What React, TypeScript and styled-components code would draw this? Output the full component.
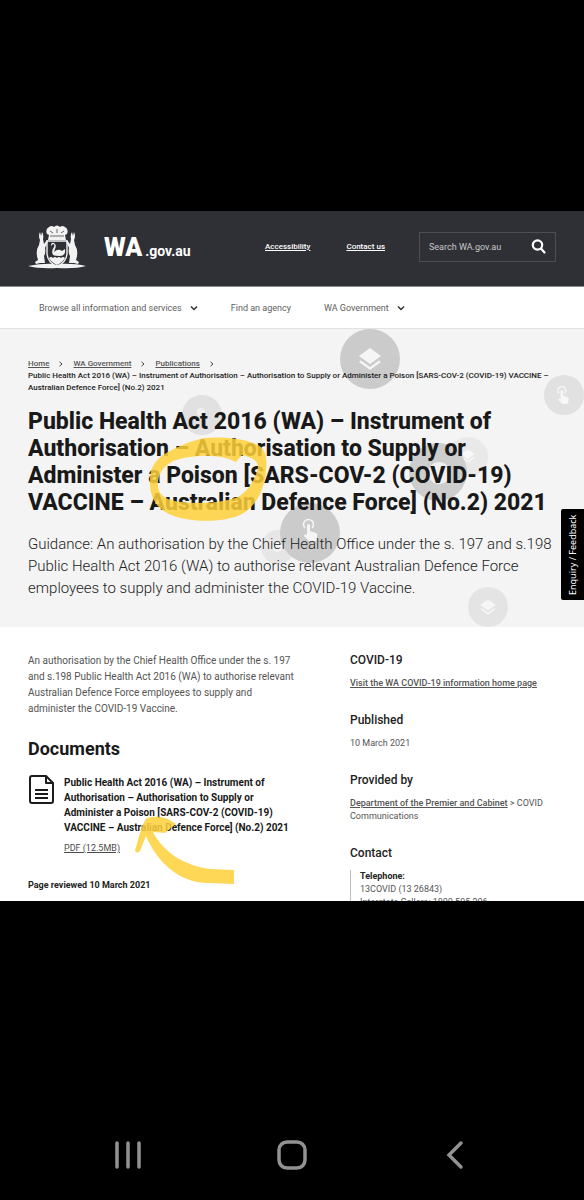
import React from "react";
import styled, { createGlobalStyle } from "styled-components";

const Global = createGlobalStyle`
  *, *::before, *::after { box-sizing: border-box; }
  body { margin: 0; background: #000; font-family: Roboto, "Liberation Sans", sans-serif; color: #4a4a4a; }
  h1, h2, h3, p, ol { margin: 0; padding: 0; }
  a { color: inherit; text-underline-offset: 1px; }
  svg { display: block; }
`;

const Screen = styled.div`
  display: flex;
  flex-direction: column;
  height: 100vh;
  background: #000;
`;

const Letterbox = styled.div`
  flex: 211 1 0;
`;

const Browser = styled.div`
  position: relative;
  flex: 690 1 0;
  min-height: 0;
  overflow: hidden;
  background: #fff;
`;

const Header = styled.header`
  display: flex;
  align-items: center;
  height: 75px;
  padding: 0 28px 4px;
  background: #2f3035;
  color: #fff;
`;

const Brand = styled.a`
  display: flex;
  align-items: center;
  gap: 18px;
  text-decoration: none;
`;

const Wordmark = styled.span`
  padding-top: 6px;
  font-size: 25px;
  font-weight: 900;
  line-height: 30px;
  white-space: nowrap;
  small { margin-left: 3px; font-size: 14px; font-weight: 700; }
`;

const TopLinks = styled.nav`
  flex: 1;
  display: flex;
  justify-content: flex-end;
  gap: 36px;
  margin-right: 34px;
  font-size: 8px;
  font-weight: 500;
  white-space: nowrap;
`;

const SearchBox = styled.form`
  display: flex;
  align-items: center;
  width: 137px;
  height: 30px;
  padding: 0 9px;
  border: 1px solid #4c4d52;
`;

const SearchInput = styled.input`
  flex: 1;
  min-width: 0;
  padding: 0;
  border: 0;
  outline: 0;
  background: transparent;
  color: #fff;
  font: 400 9px/14px Roboto, sans-serif;
  &::placeholder { color: #c8c8ca; opacity: 1; }
`;

const IconButton = styled.button`
  padding: 0;
  border: 0;
  background: none;
  color: inherit;
`;

const MainNav = styled.nav`
  display: flex;
  align-items: center;
  gap: 33px;
  height: 43px;
  padding: 0 39px;
  border-top: 1px solid #8d8d8f;
  border-bottom: 1px solid #e2e2e2;
  background: #fff;
`;

const NavItem = styled.button`
  display: flex;
  align-items: center;
  gap: 8px;
  padding: 0;
  border: 0;
  background: none;
  color: #5e5e5e;
  font: 400 9px/12px Roboto, sans-serif;
`;

const Hero = styled.section`
  position: relative;
  height: 298px;
  padding: 29px 28px 0;
  background: #f4f4f4;
`;

const Layer = styled.svg`
  position: absolute;
  left: 0;
  top: 0;
  pointer-events: none;
`;

const HeroBody = styled.div`
  position: relative;
`;

const Crumbs = styled.ol`
  display: flex;
  flex-wrap: wrap;
  list-style: none;
  color: #555;
  font-size: 8px;
  font-weight: 500;
  line-height: 12px;
  li { display: flex; align-items: center; gap: 10px; margin-right: 10px; }
`;

const CurrentCrumb = styled.li`
  && { display: block; width: 100%; margin: 0; color: #222; }
`;

const Title = styled.h1`
  margin-top: 14px;
  color: #191919;
  font-size: 23px;
  font-weight: 800;
  line-height: 27px;
  white-space: nowrap;
`;

const Lead = styled.p`
  margin-top: 17px;
  color: #222;
  font-size: 15px;
  font-weight: 300;
  line-height: 22px;
  white-space: nowrap;
`;

const Feedback = styled.button`
  position: absolute;
  right: 0;
  top: 298px;
  width: 23px;
  height: 91px;
  padding: 0;
  border: 0;
  border-radius: 2px 0 0 2px;
  background: #000;
  color: #fff;
  font: 400 9px/23px "Noto Sans", sans-serif;
  writing-mode: vertical-rl;
  white-space: nowrap;
  span { display: block; transform: rotate(180deg); }
`;

const Columns = styled.div`
  display: grid;
  grid-template-columns: 1fr 206px;
  column-gap: 50px;
  padding: 26px 28px 0;
`;

const Summary = styled.p`
  font-size: 10px;
  line-height: 16px;
  color: #555;
  white-space: nowrap;
`;

const SectionTitle = styled.h2`
  margin-top: 21px;
  color: #191919;
  font-size: 18px;
  font-weight: 700;
  line-height: 22px;
`;

const Document = styled.article`
  display: flex;
  gap: 10px;
  margin-top: 15px;
`;

const DocTitle = styled.h3`
  color: #191919;
  font-size: 10px;
  font-weight: 700;
  line-height: 15px;
  white-space: nowrap;
`;

const DocLink = styled.a`
  display: inline-block;
  margin-top: 6px;
  font-size: 9px;
  line-height: 14px;
`;

const Reviewed = styled.p`
  margin-top: 23px;
  color: #222;
  font-size: 9px;
  font-weight: 700;
  line-height: 14px;
`;

const Aside = styled.aside`
  display: flex;
  flex-direction: column;
  gap: 23px;
`;

const Fact = styled.section`
  color: #555;
  font-size: 9px;
  line-height: 13px;
  white-space: nowrap;
  a { font-weight: 500; }
`;

const FactTitle = styled.h3`
  margin-bottom: 9px;
  color: #222;
  font-size: 12px;
  font-weight: 500;
  line-height: 15px;
`;

const Telephone = styled.div`
  padding-left: 9px;
  border-left: 1px solid #bbb;
  strong { color: #222; font-weight: 700; }
`;

const PhoneBar = styled.nav`
  flex: 299 1 0;
  display: flex;
  align-items: flex-end;
  justify-content: space-between;
  padding: 0 112px;
  color: #929292;
  button { margin-bottom: 28px; }
`;

const Chevron = () => (
  <svg width="8" height="8" viewBox="0 0 8 8" fill="none" stroke="#333" strokeWidth="1.5"><path d="M1 2.5 4 5.5 7 2.5" /></svg>
);
const CrumbArrow = () => (
  <svg width="4" height="6" viewBox="0 0 4 6" fill="none" stroke="#444"><path d="M.5.8 3 3 .5 5.2" /></svg>
);

const Crest = () => (
  <svg width="58" height="44" viewBox="0 0 58 44" fill="#f2f2f2">
    <path d="M0 41q14-3 29-2 17-1 29 2-10 3-29 2-18 1-29-2z" />
    <path d="M19 9q-2-5 2-7 3-2 5 0 3-3 6 0 2-2 5 0 4 2 2 7l-2 1 1 5H20l1-5z" />
    <path d="M19 16h20v13q-1 9-10 12-9-3-10-12z" fill="#2f3035" stroke="#f2f2f2" strokeWidth="1.4" />
    <path d="M21 33q2-2 4 0 2-2 4 0 2-2 4 0 2-2 4 0-2 4-8 7-6-3-8-7z" />
    <path d="M25 30q-2-4 1-8 1-3-1-3l-2 2q0-4 3-3 3 2 1 6l-1 3q4-4 8-1l3-2q1 7-5 7-5 0-7-1z" />
    <path d="M12 7l1 4 1-4q2 3 1 7l1 5 3-4 1 1-3 7q1 5-1 8l1 7h-5l-4 1-1-2 3-2q-3-9 1-15l1-5q-2-4 0-8z" />
    <path d="M46 7l-1 4-1-4q-2 3-1 7l-1 5-3-4-1 1 3 7q-1 5 1 8l-1 7h5l4 1 1-2-3-2q3-9-1-15l-1-5q2-4 0-8z" />
    <path d="M22 11h14M22 6l3 2M29 4v4M36 6l-3 2" stroke="#68696d" fill="none" />
  </svg>
);

interface GlyphProps {
  x: number;
  y: number;
  s?: number;
  fill?: string;
}

const LayersGlyph = ({ x, y, s = 1, fill = "#fff" }: GlyphProps) => (
  <g transform={`translate(${x} ${y}) scale(${s})`} fill={fill}>
    <path d="M0-11 11-3 0 5-11-3z" />
    <path d="M-11 3-9 1.500 0 8 9 1.500 11 3 0 11z" />
  </g>
);

const TouchGlyph = ({ x, y, s = 1, fill = "#fff" }: GlyphProps) => (
  <g transform={`translate(${x} ${y}) scale(${s})`}>
    <path d="M-5-2a5 5 0 1 1 7 0" fill="none" stroke={fill} strokeWidth="1.6" />
    <path d="M-3-5q1.500-2 3 0v6l6 2q2 1 1 3l-1 5h-7l-5-5 1-2 2 1z" fill={fill} />
  </g>
);

const Decor = () => (
  <Layer width="584" height="298" viewBox="0 329 584 298" aria-hidden="true">
    <circle cx="468" cy="457" r="20" fill="#e9e9e9" />
    <LayersGlyph x={468} y={456} s={0.6} fill="#f8f8f8" />
    <circle cx="370" cy="359" r="30" fill="#cbcbcb" />
    <LayersGlyph x={370} y={359} fill="#f5f5f5" />
    <circle cx="564" cy="395" r="20" fill="#e1e1e1" />
    <TouchGlyph x={563} y={395} s={0.8} fill="#f8f8f8" />
    <circle cx="202" cy="415" r="20" fill="#e1e1e1" />
    <circle cx="201" cy="412" r="4" fill="#f1f1f1" />
    <circle cx="438" cy="472" r="29" fill="#cdcdcd" />
    <circle cx="439" cy="473" r="11" fill="#f0f0f0" />
    <circle cx="278" cy="547" r="17" fill="#e6e6e6" />
    <circle cx="277" cy="547" r="5" fill="#f3f3f3" />
    <circle cx="310" cy="533" r="30" fill="#cbcbcb" />
    <TouchGlyph x={310} y={530} fill="#f5f5f5" />
    <circle cx="488" cy="607" r="20" fill="#e4e4e4" />
    <LayersGlyph x={488} y={607} s={0.7} fill="#f6f6f6" />
  </Layer>
);

const Marker = () => (
  <Layer width="584" height="690" viewBox="0 211 584 690" fill="#ffd03a" fillOpacity="0.85" aria-hidden="true">
    <path
      fillRule="evenodd"
      d="M150 485C149 472 153 462 163 455C176 447 190 441 205 438C225 436 250 439 261 447C268 454 267 466 265 478C262 495 253 509 240 515C222 523 190 522 174 516C160 511 151 502 150 485zM158 487C159 496 168 501 182 502C200 504 222 503 238 497C249 491 257 476 258 466C257 460 251 457 242 455L236 462 229 459C212 453 186 456 173 461C162 467 157 476 158 487z"
    />
    <path d="M147 818C142 822 138 842 135 850Q136 855 140 851L146 836C156 860 178 883 208 883L234 884V870L210 869C185 866 163 852 153 832L165 833 176 824C168 817 156 815 147 818z" />
  </Layer>
);

export default function App() {
  return (
    <>
      <Global />
      <Screen>
        <Letterbox />
        <Browser>
          <Header>
            <Brand href="#" aria-label="WA.gov.au">
              <Crest />
              <Wordmark>WA<small>.gov.au</small></Wordmark>
            </Brand>
            <TopLinks>
              <a href="#">Accessibility</a>
              <a href="#">Contact us</a>
            </TopLinks>
            <SearchBox>
              <SearchInput aria-label="Search" placeholder="Search WA.gov.au" />
              <IconButton type="button" aria-label="Submit search">
                <svg width="15" height="15" viewBox="0 0 15 15" fill="none" stroke="#fff" strokeWidth="2.2" strokeLinecap="round"><circle cx="6.500" cy="6" r="4.700" /><path d="m10 9.500 3.500 4" /></svg>
              </IconButton>
            </SearchBox>
          </Header>
          <MainNav>
            <NavItem>Browse all information and services <Chevron /></NavItem>
            <NavItem>Find an agency</NavItem>
            <NavItem>WA Government <Chevron /></NavItem>
          </MainNav>
          <Hero>
            <Decor />
            <HeroBody>
              <Crumbs>
                <li><a href="#">Home</a><CrumbArrow /></li>
                <li><a href="#">WA Government</a><CrumbArrow /></li>
                <li><a href="#">Publications</a><CrumbArrow /></li>
                <CurrentCrumb>Public Health Act 2016 (WA) – Instrument of Authorisation – Authorisation to Supply or Administer a Poison [SARS-COV-2 (COVID-19) VACCINE –<br />Australian Defence Force] (No.2) 2021</CurrentCrumb>
              </Crumbs>
              <Title>
                Public Health Act 2016 (WA) – Instrument of<br />
                Authorisation – Authorisation to Supply or<br />
                Administer a Poison [SARS-COV-2 (COVID-19)<br />
                VACCINE – Australian Defence Force] (No.2) 2021
              </Title>
              <Lead>
                Guidance: An authorisation by the Chief Health Office under the s. 197 and s.198<br />
                Public Health Act 2016 (WA) to authorise relevant Australian Defence Force<br />
                employees to supply and administer the COVID-19 Vaccine.
              </Lead>
            </HeroBody>
          </Hero>
          <Columns>
            <main>
              <Summary>
                An authorisation by the Chief Health Office under the s. 197<br />
                and s.198 Public Health Act 2016 (WA) to authorise relevant<br />
                Australian Defence Force employees to supply and<br />
                administer the COVID-19 Vaccine.
              </Summary>
              <SectionTitle>Documents</SectionTitle>
              <Document>
                <svg width="26" height="29" viewBox="0 0 26 29" fill="none" stroke="#1c1c1c" strokeWidth="2" strokeLinejoin="round"><path d="M4 1h14l7 7v18q0 2-2 2H4q-2 0-2-2V3q0-2 2-2zM18 1v7h7M7 15h13M7 19h13M7 23h13" /></svg>
                <div>
                  <DocTitle>
                    Public Health Act 2016 (WA) – Instrument of<br />
                    Authorisation – Authorisation to Supply or<br />
                    Administer a Poison [SARS-COV-2 (COVID-19)<br />
                    VACCINE – Australian Defence Force] (No.2) 2021
                  </DocTitle>
                  <DocLink href="#">PDF (12.5MB)</DocLink>
                </div>
              </Document>
              <Reviewed>Page reviewed 10 March 2021</Reviewed>
            </main>
            <Aside>
              <Fact>
                <FactTitle>COVID-19</FactTitle>
                <a href="#">Visit the WA COVID-19 information home page</a>
              </Fact>
              <Fact>
                <FactTitle>Published</FactTitle>
                <p>10 March 2021</p>
              </Fact>
              <Fact>
                <FactTitle>Provided by</FactTitle>
                <p><a href="#">Department of the Premier and Cabinet</a> &gt; COVID<br />Communications</p>
              </Fact>
              <Fact>
                <FactTitle>Contact</FactTitle>
                <Telephone>
                  <strong>Telephone:</strong><br />
                  13COVID (13 26843)<br />
                  Interstate Callers: 1800 595 206
                </Telephone>
              </Fact>
            </Aside>
          </Columns>
          <Feedback><span>Enquiry / Feedback</span></Feedback>
          <Marker />
        </Browser>
        <PhoneBar>
          <IconButton type="button" aria-label="Recent apps">
            <svg width="32" height="34" viewBox="0 0 32 34" fill="none" stroke="currentColor" strokeWidth="3.5" strokeLinecap="round"><path d="M5 5v24M16 5v24M27 5v24" /></svg>
          </IconButton>
          <IconButton type="button" aria-label="Home">
            <svg width="32" height="34" viewBox="0 0 32 34" fill="none" stroke="currentColor" strokeWidth="3.5"><rect x="3" y="4" width="26" height="26" rx="8" /></svg>
          </IconButton>
          <IconButton type="button" aria-label="Back">
            <svg width="32" height="34" viewBox="0 0 32 34" fill="none" stroke="currentColor" strokeWidth="3.5" strokeLinecap="round"><path d="M21 5 9 17l12 12" /></svg>
          </IconButton>
        </PhoneBar>
      </Screen>
    </>
  );
}
